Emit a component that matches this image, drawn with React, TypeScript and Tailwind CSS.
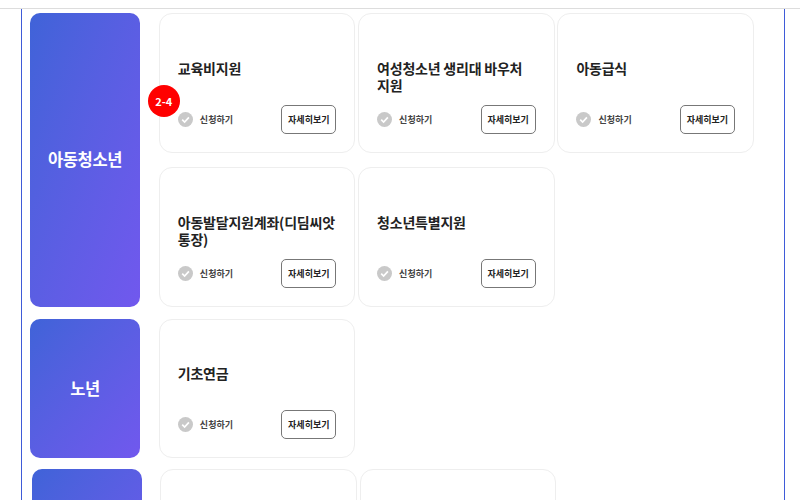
const FONT = "font-['Noto_Sans_CJK_KR','Noto_Sans',sans-serif]";

function Check() {
  return (
    <svg width="15" height="15" viewBox="0 0 15 15" className="shrink-0">
      <circle cx="7.5" cy="7.5" r="7.5" fill="#c9c9c9" />
      <path d="M4.2 7.6 L6.6 10 L10.9 5.4" fill="none" stroke="#fff" strokeWidth="1.7" />
    </svg>
  );
}

function Card({ title, badge, tight, keep }: { title: string; badge?: boolean; tight?: boolean; keep?: boolean }) {
  return (
    <div className={`relative flex w-[196.5px] shrink-0 flex-col rounded-[13px] border border-[#eeeeee] bg-white pl-[18px] pr-[18px] ${tight ? "h-[139px] pt-[45px]" : "h-[140px] pt-[46px]"}`}>
      <div className={`h-[45px] text-[14px] font-bold leading-[17px] tracking-[-0.22px] text-[#222222] ${keep ? "break-keep" : ""}`}>{title}</div>
      <div className="flex items-center justify-between">
        <div className="flex items-center gap-[7px]">
          <Check />
          <span className="text-[9px] font-bold tracking-[0.05px] text-[#444444]">신청하기</span>
        </div>
        <button className="h-[29px] w-[55px] rounded-[5px] border border-[#777777] bg-white text-[9px] font-bold text-[#222222]">자세히보기</button>
      </div>
      {badge && (
        <div className="absolute left-[-12px] top-[71px] flex h-[32px] w-[32px] items-center justify-center rounded-full bg-[#ff0000] text-[11px] font-bold text-white">2-4</div>
      )}
    </div>
  );
}

function Side({ label, className }: { label: string; className: string }) {
  return (
    <div className={`flex w-[110px] shrink-0 items-center justify-center rounded-[10px] bg-gradient-to-br from-[#3f63d8] to-[#7158ee] text-[16.5px] font-bold tracking-[-0.4px] text-white ${className}`}>
      {label}
    </div>
  );
}

export default function App() {
  return (
    <div className={`h-[500px] w-[800px] overflow-hidden bg-white ${FONT}`}>
      <div className="mt-[8px] border-t border-[#dddddd]" />
      <div className="ml-[21px] h-[491px] w-[764px] border-x border-[#3f5bd8] pl-[8px] pt-[4px]">
        <div className="flex gap-[18.8px]">
          <Side label="아동청소년" className="h-[294px] pb-[2px]" />
          <div className="flex w-[600px] flex-wrap content-start gap-x-[2.8px] gap-y-[14px]">
            <Card title="교육비지원" badge />
            <Card title="여성청소년 생리대 바우처 지원" keep />
            <Card title="아동급식" />
            <Card title="아동발달지원계좌(디딤씨앗통장)" />
            <Card title="청소년특별지원" />
          </div>
        </div>
        <div className="mt-[12px] flex gap-[18.8px]">
          <Side label="노년" className="h-[139px]" />
          <Card title="기초연금" tight />
        </div>
        <div className="ml-[2px] mt-[11px] flex gap-[18.4px]">
          <Side label="" className="h-[140px]" />
          <div className="flex gap-[2.8px]">
            <div className="h-[140px] w-[196.5px] rounded-[13px] border border-[#eeeeee]" />
            <div className="h-[140px] w-[196.5px] rounded-[13px] border border-[#eeeeee]" />
          </div>
        </div>
      </div>
    </div>
  );
}
